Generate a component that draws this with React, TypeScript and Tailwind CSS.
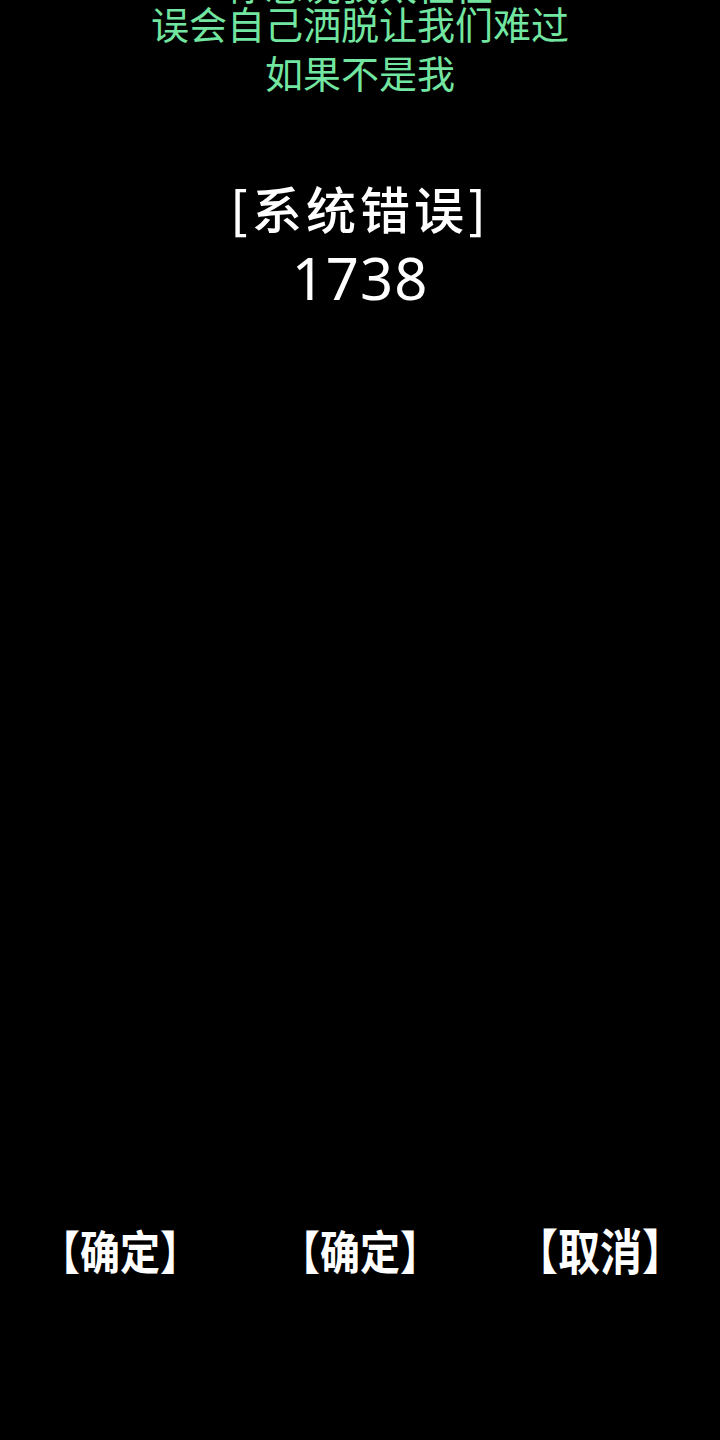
export default function App() {
  const cjk = { fontFamily: '"Noto Sans CJK SC", "Noto Sans", sans-serif' };
  return (
    <div className="w-[720px] h-[1440px] bg-black overflow-hidden flex flex-col" style={cjk}>
      <div className="flex flex-col items-center text-[#72e6a0] text-[38px] leading-[49px] mt-[-41px]">
        <div>你总说我太任性</div>
        <div className="-mt-[10px]">误会自己洒脱让我们难过</div>
        <div>如果不是我</div>
      </div>
      <div className="flex flex-col items-center text-white mt-[81px]">
        <div className="text-[50px] leading-[60px] tracking-[4px] font-medium">[系统错误]</div>
        <div className="text-[58px] leading-[70px] tracking-[1px] mt-[6px]" style={{ fontFamily: '"Noto Sans", sans-serif' }}>1738</div>
      </div>
      <div className="grid grid-cols-3 mt-[911px] text-white font-bold text-[40px] leading-[50px]">
        <div className="text-center scale-y-115">【确定】</div>
        <div className="text-center scale-y-115">【确定】</div>
        <div className="text-center scale-y-115 text-[42px]">【取消】</div>
      </div>
    </div>
  );
}
